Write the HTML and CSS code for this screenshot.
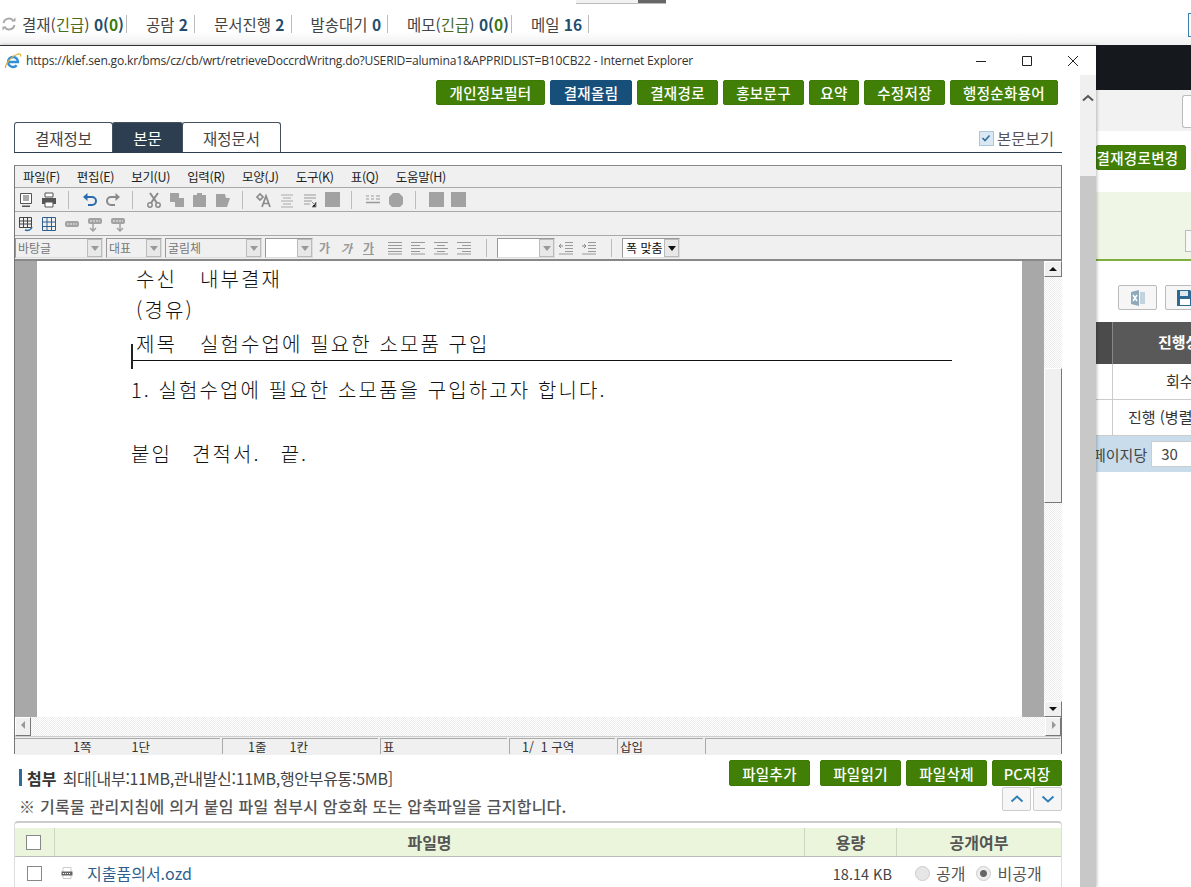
FILE: index.html
```html
<!DOCTYPE html>
<html lang="ko">
<head>
  <meta charset="UTF-8">
  <title>결재 문서 작성</title>
  <link rel="stylesheet" href="styles.css">
</head>
<body>
  <div class="searchbar"></div>
  <div class="status">
    <svg class="refresh" width="16" height="16" viewBox="0 0 16 16"><path d="M2.500 7A5.500 5.500 0 0 1 12.500 5M13.500 9A5.500 5.500 0 0 1 3.500 11" fill="none" stroke="#a8a8a8" stroke-width="1.800"/><path d="M10.500 5.500h4v-4zM5.500 10.500h-4v4z" fill="#a8a8a8"/></svg>
    <span class="stat">결재(<em>긴급</em>) <b>0(<i>0</i>)</b></span>
    <span class="stat stat-num">공람 <b>2</b></span>
    <span class="stat stat-num">문서진행 <b>2</b></span>
    <span class="stat stat-num">발송대기 <b>0</b></span>
    <span class="stat">메모(<em>긴급</em>) <b>0(<i>0</i>)</b></span>
    <span class="stat stat-num">메일 <b>16</b></span>
  </div>
  <div class="corner-box"></div>

  <!-- page behind the popup -->
  <div class="behind">
    <div class="dark-band"></div>
    <div class="grey-band"><span class="grey-chip"></span></div>
    <div class="route-row"><button class="btn route-btn">결재경로변경</button></div>
    <div class="green-panel"><span class="panel-chip"></span></div>
    <div class="tool-row">
      <span class="tool-btn"><svg width="18" height="18" viewBox="0 0 18 18"><path d="M2 3l8-2v16l-8-2z" fill="#8fa9bb"/><path d="M11 3h5v12h-5z" fill="#c3d3de"/><path d="M4 6l4 6M8 6l-4 6" stroke="#fff" stroke-width="1.500"/></svg></span>
      <span class="tool-btn"><svg width="18" height="18" viewBox="0 0 18 18"><path d="M1 1h13l3 3v13H1z" fill="#2c6a94"/><path d="M4 2h8v5H4z" fill="#dfe8ee"/><path d="M4 10h10v6H4z" fill="#fff"/></svg></span>
    </div>
    <div class="list-head"><span class="head-gap"></span><span class="head-cell">진행상태</span></div>
    <div class="list-row"><span class="row-gap"></span><span class="row-cell">회수</span></div>
    <div class="list-row"><span class="row-gap"></span><span class="row-cell row-long">진행 (병렬)</span></div>
    <div class="pager">페이지당 <span class="pager-select">30</span></div>
  </div>

  <!-- popup window -->
  <div class="popup">
    <div class="titlebar">
      <svg width="18" height="18" viewBox="0 0 18 18"><path d="M4.500 10h9.500a5 5 0 1 0-1.300 3.400" fill="none" stroke="#2f8fd6" stroke-width="2.400"/><path d="M1.500 16C1 13 7 4 14 2c2-.5 3 .5 2.500 2.500" fill="none" stroke="#e3b23c" stroke-width="1.300"/></svg>
      <span class="title-text">https://klef.sen.go.kr/bms/cz/cb/wrt/retrieveDoccrdWritng.do?USERID=alumina1&amp;APPRIDLIST=B10CB22 - Internet Explorer</span>
      <div class="win-controls">
        <svg width="12" height="12" viewBox="0 0 12 12"><path d="M1 6.500h10" stroke="#222"/></svg>
        <svg width="12" height="12" viewBox="0 0 12 12"><path d="M1.500 1.500h9v9h-9z" fill="none" stroke="#222"/></svg>
        <svg width="12" height="12" viewBox="0 0 12 12"><path d="M1 1l10 10M11 1L1 11" stroke="#222"/></svg>
      </div>
    </div>

    <div class="popup-body">
      <div class="popup-main">
        <div class="actions">
          <button class="btn">개인정보필터</button>
          <button class="btn btn-blue">결재올림</button>
          <button class="btn">결재경로</button>
          <button class="btn">홍보문구</button>
          <button class="btn">요약</button>
          <button class="btn">수정저장</button>
          <button class="btn">행정순화용어</button>
        </div>

        <div class="tabs">
          <span class="tab">결재정보</span>
          <span class="tab tab-on">본문</span>
          <span class="tab">재정문서</span>
          <label class="view-check"><span class="check"><svg width="10" height="10" viewBox="0 0 10 10"><path d="M1.500 5l2.500 2.500 4.500-5" fill="none" stroke="#2f6f9f" stroke-width="1.600"/></svg></span>본문보기</label>
        </div>

        <div class="editor">
          <div class="bar menu">
            <span>파일(F)</span><span>편집(E)</span><span>보기(U)</span><span>입력(R)</span><span>모양(J)</span><span>도구(K)</span><span>표(Q)</span><span>도움말(H)</span>
          </div>
          <div class="bar tools">
            <svg width="16" height="16" viewBox="0 0 16 16"><path d="M2.500 1.500h11v10h-11z" fill="#fff" stroke="#555"/><path d="M5 4h6M5 6h6M5 8h6" stroke="#555"/><path d="M4 13.500h8v1.500H4z" fill="#555"/></svg>
            <svg width="16" height="16" viewBox="0 0 16 16"><path d="M4 1h8v4H4z" fill="#fff" stroke="#555"/><path d="M1 6h14v6H1z" fill="#555"/><path d="M4 10h8v5H4z" fill="#fff" stroke="#555"/></svg>
            <i class="sep"></i>
            <svg width="16" height="16" viewBox="0 0 16 16"><path d="M4 5h6a3.500 3.500 0 0 1 0 8H6" fill="none" stroke="#2a6bb0" stroke-width="2"/><path d="M5.500 1v8L1 5z" fill="#2a6bb0"/></svg>
            <svg width="16" height="16" viewBox="0 0 16 16"><path d="M12 5H6a3.500 3.500 0 0 0 0 8h4" fill="none" stroke="#8a8a8a" stroke-width="2"/><path d="M10.500 1v8L15 5z" fill="#8a8a8a"/></svg>
            <i class="sep"></i>
            <svg width="16" height="16" viewBox="0 0 16 16"><path d="M4 1l7 10M12 1L5 11" stroke="#8a8a8a" stroke-width="2"/><circle cx="4" cy="13" r="2.200" fill="none" stroke="#8a8a8a" stroke-width="1.500"/><circle cx="12" cy="13" r="2.200" fill="none" stroke="#8a8a8a" stroke-width="1.500"/></svg>
            <svg width="16" height="16" viewBox="0 0 16 16"><path d="M1 1h9v5h5v9H6v-5H1z" fill="#a2a2a2"/></svg>
            <svg width="16" height="16" viewBox="0 0 16 16"><path d="M1 3h4V1h5v2h4v12H1z" fill="#a2a2a2"/></svg>
            <svg width="16" height="16" viewBox="0 0 16 16"><path d="M1 2h9l1 4h4l-3 9H1z" fill="#a2a2a2"/></svg>
            <i class="sep"></i>
            <svg width="16" height="16" viewBox="0 0 16 16"><path d="M1 5l3-3 3 3-3 3zM6 15l4-11 4 11M7.500 11.500h5" fill="none" stroke="#8a8a8a" stroke-width="1.700"/></svg>
            <svg width="16" height="16" viewBox="0 0 16 16"><path d="M2 3h12M4 6h8M2 9h12M4 12h8M2 15h12" stroke="#aaa"/></svg>
            <svg width="16" height="16" viewBox="0 0 16 16"><path d="M2 3h12M2 6h12M2 9h8M2 12h6" stroke="#999"/><path d="M10 10l4 4M14 10v5h-4" stroke="#8a8a8a"/></svg>
            <span class="blank"></span>
            <i class="sep"></i>
            <svg width="16" height="16" viewBox="0 0 16 16"><path d="M1 4h3M6 4h3M11 4h4M1 7h3M6 7h3M11 7h4" stroke="#999"/><path d="M1 10.500h14" stroke="#999" stroke-width="1.500"/></svg>
            <svg width="16" height="16" viewBox="0 0 16 16"><path d="M5 1h6l4 4v7l-3 3H4l-3-3V5z" fill="#a2a2a2"/></svg>
            <i class="sep"></i>
            <span class="blank"></span>
            <span class="blank"></span>
          </div>
          <div class="bar tools">
            <svg width="16" height="16" viewBox="0 0 16 16"><path d="M1.500 1.500h12v10h-12zM1.500 5h12M1.500 8h12M5.500 1.500v10M9.500 1.500v10" fill="none" stroke="#444"/><path d="M7 14c3 1 6 0 7-3" fill="none" stroke="#2a6bb0" stroke-width="1.500"/></svg>
            <svg width="16" height="16" viewBox="0 0 16 16"><path d="M1.500 1.500h13v13h-13zM1.500 6h13M1.500 10.500h13M6 1.500v13M10.500 1.500v13" fill="none" stroke="#2f5f8f"/></svg>
            <svg width="16" height="16" viewBox="0 0 16 16"><rect x="1" y="5" width="14" height="6" rx="2" fill="#a2a2a2"/><path d="M3 8h10" stroke="#eee" stroke-dasharray="2 1"/></svg>
            <svg width="16" height="16" viewBox="0 0 16 16"><rect x="1" y="2" width="14" height="6" rx="2" fill="#a2a2a2"/><path d="M3 5h10" stroke="#eee" stroke-dasharray="2 1"/><path d="M6 8v6M3 12l3 3 3-3" fill="none" stroke="#a2a2a2" stroke-width="1.500"/></svg>
            <svg width="16" height="16" viewBox="0 0 16 16"><rect x="1" y="2" width="14" height="6" rx="2" fill="#a2a2a2"/><path d="M3 5h10" stroke="#eee" stroke-dasharray="2 1"/><path d="M10 8v6M7 12l3 3 3-3" fill="none" stroke="#a2a2a2" stroke-width="1.500"/></svg>
          </div>
          <div class="bar format">
            <span class="combo w-face">바탕글<i class="drop"></i></span>
            <span class="combo w-rep">대표<i class="drop"></i></span>
            <span class="combo w-font">굴림체<i class="drop"></i></span>
            <span class="combo w-size white"><i class="drop"></i></span>
            <span class="fmt">가</span><span class="fmt it">가</span><span class="fmt un">가</span>
            <svg width="16" height="14" viewBox="0 0 16 14"><path d="M1 1.500h14M1 4.500h14M1 7.500h14M1 10.500h14M1 13h14" stroke="#999"/></svg>
            <svg width="16" height="14" viewBox="0 0 16 14"><path d="M1 1.500h14M1 4.500h9M1 7.500h14M1 10.500h9M1 13h14" stroke="#999"/></svg>
            <svg width="16" height="14" viewBox="0 0 16 14"><path d="M1 1.500h14M4 4.500h8M1 7.500h14M4 10.500h8M1 13h14" stroke="#999"/></svg>
            <svg width="16" height="14" viewBox="0 0 16 14"><path d="M1 1.500h14M6 4.500h9M1 7.500h14M6 10.500h9M1 13h14" stroke="#999"/></svg>
            <i class="sep"></i>
            <span class="combo w-spc white"><i class="drop"></i></span>
            <svg width="16" height="14" viewBox="0 0 16 14"><path d="M7 1.500h8M7 4.500h8M7 7.500h8M7 10.500h8M1 13h14" stroke="#999"/><path d="M5 5H1M3 3L1 5l2 2" fill="none" stroke="#888"/></svg>
            <svg width="16" height="14" viewBox="0 0 16 14"><path d="M7 1.500h8M7 4.500h8M7 7.500h8M7 10.500h8M1 13h14" stroke="#999"/><path d="M1 5h4M3 3l2 2-2 2" fill="none" stroke="#888"/></svg>
            <i class="sep"></i>
            <span class="combo w-zoom white">폭 맞춤<i class="drop dark"></i></span>
          </div>

          <div class="doc">
            <div class="doc-margin"></div>
            <div class="page">
              <p class="line l1"><span class="lbl">수신</span>내부결재</p>
              <p class="line l2">(경유)</p>
              <p class="line l3"><span class="lbl">제목</span>실험수업에 필요한 소모품 구입</p>
              <div class="doc-rule"></div>
              <i class="caret"></i>
              <p class="line l4">1. 실험수업에 필요한 소모품을 구입하고자 합니다.</p>
              <p class="line l5"><span class="lbl2">붙임</span><span class="lbl2">견적서.</span>끝.</p>
            </div>
            <div class="doc-margin"></div>
            <div class="vscroll">
              <span class="sbtn"><i class="up"></i></span>
              <span class="dither track-a"></span>
              <span class="sthumb"></span>
              <span class="dither track-b"></span>
              <span class="sbtn"><i class="down"></i></span>
            </div>
          </div>

          <div class="hscroll">
            <span class="sbtn"><i class="left"></i></span>
            <span class="dither hfill"></span>
            <span class="sbtn"><i class="right"></i></span>
          </div>
          <div class="statusline">
            <span class="c1"><b>1쪽</b><b>1단</b></span>
            <span class="c2"><b>1줄</b><b>1칸</b></span>
            <span class="c3">표</span>
            <span class="c4">1/ &nbsp;1 구역</span>
            <span class="c5">삽입</span>
            <span class="c6"></span>
          </div>
        </div>

        <div class="attach">
          <div class="attach-head">
            <div class="attach-text">
              <p class="limit"><strong>첨부</strong> 최대[내부:11MB,관내발신:11MB,행안부유통:5MB]</p>
              <p class="warn">※ 기록물 관리지침에 의거 붙임 파일 첨부시 암호화 또는 압축파일을 금지합니다.</p>
            </div>
            <div class="attach-side">
              <div class="file-btns">
                <button class="btn">파일추가</button>
                <button class="btn">파일읽기</button>
                <button class="btn">파일삭제</button>
                <button class="btn btn-pc">PC저장</button>
              </div>
              <div class="move-btns">
                <span class="move"><svg width="14" height="8" viewBox="0 0 14 8"><path d="M1.500 6.500L7 1.500l5.500 5" fill="none" stroke="#2f7fb8" stroke-width="2"/></svg></span>
                <span class="move"><svg width="14" height="8" viewBox="0 0 14 8"><path d="M1.500 1.500L7 6.500l5.500-5" fill="none" stroke="#2f7fb8" stroke-width="2"/></svg></span>
              </div>
            </div>
          </div>

          <div class="files">
            <div class="file-row file-top">
              <span class="fc-check"><i class="box"></i></span>
              <span class="fc-name">파일명</span>
              <span class="fc-size">용량</span>
              <span class="fc-open">공개여부</span>
            </div>
            <div class="file-row file-item">
              <span class="fc-check"><i class="box"></i></span>
              <span class="fc-name left">
                <svg width="14" height="14" viewBox="0 0 14 14"><path d="M3 1.500h8v11H3z" fill="#fff" stroke="#ccc"/><path d="M1.500 5.500h11v4h-11z" fill="#666"/><path d="M3 7.500h8" stroke="#fff" stroke-dasharray="1 1"/></svg>
                <a class="file-link">지출품의서.ozd</a>
              </span>
              <span class="fc-size val">18.14 KB</span>
              <span class="fc-open val"><i class="radio"></i>공개<i class="radio on"></i>비공개</span>
            </div>
          </div>
        </div>
      </div>

      <div class="page-scroll">
        <span class="page-up"><svg width="12" height="8" viewBox="0 0 12 8"><path d="M1 6.500L6 2l5 4.500" fill="none" stroke="#555" stroke-width="2"/></svg></span>
        <span class="page-thumb"></span>
      </div>
    </div>
  </div>
</body>
</html>
```

FILE: styles.css
```css
* {
  box-sizing: border-box;
}

html, body {
  margin: 0;
  height: 887px;
  overflow: hidden;
}

body {
  position: relative;
  width: 1191px;
  background: #fff;
  font-family: "Noto Sans CJK KR", "Noto Sans", sans-serif;
  color: #444;
}

p {
  margin: 0;
}

/* top strip */
.searchbar {
  position: absolute;
  left: 576px;
  top: 0;
  width: 90px;
  height: 4px;
  background: linear-gradient(to right, #f1f1f1 0, #f1f1f1 62px, #666 62px);
  border-bottom: 1px solid #bbb;
}

.status {
  display: flex;
  align-items: center;
  height: 45px;
  padding: 3px 0 0 1px;
  font-size: 15.500px;
  background: linear-gradient(to bottom, #fff 70%, #f0f0f0);
}

.refresh {
  flex: none;
  margin-right: 5px;
}

.stat {
  padding-right: 2px;
  margin-right: 19px;
  border-right: 1px solid #bbb;
  line-height: 18px;
  white-space: nowrap;
}

.stat-num {
  padding-right: 6px;
}

.stat em {
  font-style: normal;
  color: #4a6a1e;
}

.stat b {
  color: #1f4e6e;
}

.stat b i {
  font-style: normal;
  color: #3d7a0c;
}

.corner-box {
  position: absolute;
  right: 0;
  top: 13px;
  width: 3px;
  height: 24px;
  border: 1px solid #3a7fb0;
  border-right: 0;
}

/* page behind the popup */
.behind {
  margin-left: 1096px;
}

.dark-band {
  height: 45px;
  background: #15191d;
}

.grey-band {
  display: flex;
  justify-content: flex-end;
  height: 41px;
  padding-top: 5px;
  background: #f2f2f2;
}

.grey-chip {
  width: 9px;
  height: 33px;
  background: #fff;
  border: 1px solid #bbb;
  border-right: 0;
  border-radius: 3px 0 0 3px;
}

.route-row {
  height: 61px;
  padding-top: 14px;
}

.route-btn {
  display: block;
  width: 90px;
  height: 25px;
  border-radius: 0 3px 3px 0;
  white-space: nowrap;
  overflow: hidden;
  text-align: left;
  text-indent: -7px;
}

.green-panel {
  position: relative;
  height: 69px;
  background: #eff6e6;
  border-bottom: 2px solid #7fae3c;
}

.panel-chip {
  position: absolute;
  right: 0;
  bottom: 7px;
  width: 6px;
  height: 22px;
  border: 1px solid #bbb;
  border-right: 0;
  background: #f8f8f8;
}

.tool-row {
  display: flex;
  gap: 8px;
  height: 61px;
  padding: 24px 0 0 22px;
}

.tool-btn {
  display: flex;
  align-items: center;
  justify-content: center;
  flex: none;
  width: 39px;
  height: 25px;
  border: 1px solid #bbb;
  border-radius: 2px;
  background: #f6f6f6;
}

.list-head {
  display: flex;
  height: 42px;
  background: #595959;
  color: #fff;
  font-size: 15px;
  font-weight: 700;
}

.head-gap, .row-gap {
  flex: none;
  width: 17px;
  border-right: 1px solid #ccc;
}

.head-gap {
  background: #4b4b4b;
  border-right-color: #888;
}

.head-cell, .row-cell {
  flex: none;
  width: 100px;
  line-height: 40px;
  padding-left: 45px;
  white-space: nowrap;
}

.list-row {
  display: flex;
  height: 36px;
  font-size: 15px;
  color: #333;
  border-bottom: 1px solid #ccc;
}

.list-row .row-cell {
  padding-left: 53px;
  line-height: 34px;
}

.list-row .row-long {
  padding-left: 15px;
}

.pager {
  display: flex;
  align-items: center;
  gap: 4px;
  height: 36px;
  margin-left: -4px;
  font-size: 15px;
  color: #444;
  background: #c8dceb;
  overflow: hidden;
  white-space: nowrap;
}

.pager-select {
  flex: none;
  width: 60px;
  height: 26px;
  padding-left: 9px;
  line-height: 24px;
  font-size: 15px;
  background: #fff;
  border: 1px solid #ccc;
}

/* popup */
.popup {
  position: absolute;
  left: 0;
  top: 45px;
  width: 1096px;
  height: 842px;
  background: #fff;
  border-top: 1px solid #333;
  box-shadow: 1px 0 3px rgba(0, 0, 0, 0.25);
  display: flex;
  flex-direction: column;
}

.titlebar {
  display: flex;
  align-items: center;
  flex: none;
  height: 29px;
  padding-left: 4px;
  font-family: "Open Sans", sans-serif;
  font-size: 12px;
  color: #333;
}

.titlebar > svg {
  flex: none;
}

.title-text {
  margin-left: 4px;
  font-size: 12.100px;
  letter-spacing: -0.190px;
  white-space: nowrap;
}

.win-controls {
  display: flex;
  gap: 34px;
  margin-left: auto;
  padding-right: 17px;
}

.popup-body {
  display: flex;
  flex: 1;
  min-height: 0;
}

.popup-main {
  flex: none;
  width: 1080px;
  padding: 5px 18px 0 14px;
}

.btn {
  display: inline-flex;
  align-items: center;
  justify-content: center;
  height: 25px;
  padding: 0;
  border: 1px solid #3d7a06;
  border-radius: 2px;
  background: #417f07;
  color: #fff;
  font-family: "Noto Sans CJK KR", sans-serif;
  font-size: 14.500px;
  font-weight: 500;
  letter-spacing: 0.300px;
}

.btn-blue {
  background: #174f7b;
  border-color: #174f7b;
}

.actions {
  display: flex;
  justify-content: flex-end;
  gap: 5px;
  height: 25px;
  padding-right: 4px;
}

.actions .btn:nth-child(1) { width: 109px; }
.actions .btn:nth-child(2) { width: 82px; }
.actions .btn:nth-child(3) { width: 81px; }
.actions .btn:nth-child(4) { width: 81px; }
.actions .btn:nth-child(5) { width: 50px; }
.actions .btn:nth-child(6) { width: 81px; }
.actions .btn:nth-child(7) { width: 108px; }

.tabs {
  display: flex;
  align-items: flex-end;
  height: 31px;
  margin-top: 17px;
  border-bottom: 1px solid #2d3f50;
}

.tab {
  display: flex;
  align-items: center;
  justify-content: center;
  width: 99px;
  height: 30px;
  font-size: 15.500px;
  border: 1px solid #44525f;
  border-bottom: 0;
  border-radius: 3px 3px 0 0;
  color: #444;
}

.tab:nth-child(2) {
  width: 71px;
  margin-left: -1px;
}

.tab:nth-child(3) {
  margin-left: -1px;
}

.tab-on {
  background: #2c3e50;
  color: #fff;
}

.view-check {
  display: flex;
  align-items: center;
  gap: 3px;
  margin-left: auto;
  margin-right: 8px;
  height: 28px;
  font-size: 15.500px;
  color: #555;
}

.check {
  display: flex;
  align-items: center;
  justify-content: center;
  width: 15px;
  height: 15px;
  border: 1px solid #a9c6dc;
  background: #d9e8f3;
}

/* editor */
.editor {
  height: 589px;
  margin-top: 12px;
  border: 1px solid #777;
  border-top-color: #888;
  background: #eee;
  display: flex;
  flex-direction: column;
}

.bar {
  display: flex;
  align-items: center;
  flex: none;
  background: #f0f0f0;
  border-bottom: 1px solid #a8a8a8;
}

.menu {
  height: 22px;
  gap: 17px;
  padding-left: 8px;
  font-size: 12.500px;
  color: #222;
  letter-spacing: -0.300px;
}

.tools {
  height: 24px;
  gap: 7px;
  padding-left: 3px;
}

.tools svg {
  flex: none;
}

.sep {
  flex: none;
  width: 1px;
  height: 18px;
  margin: 0 6px 0 4px;
  background: #bbb;
}

.blank {
  flex: none;
  width: 15px;
  height: 15px;
  background: #a2a2a2;
}

.format {
  height: 25px;
  gap: 3px;
  padding-left: 0;
  border-bottom: 2px solid #888;
}

.format svg {
  flex: none;
  margin-left: 4px;
}

.format .combo + svg {
  margin-left: 0;
}

.format .sep {
  margin: 0 7px 0 9px;
}

.format svg + svg + .sep {
  margin-left: 11px;
}

.combo {
  position: relative;
  flex: none;
  height: 20px;
  padding-left: 2px;
  font-size: 12px;
  line-height: 17px;
  color: #777;
  background: #f0f0f0;
  border: 1px solid #999;
  border-right-color: #ddd;
  border-bottom-color: #ddd;
  white-space: nowrap;
}

.white {
  background: #fff;
}

.drop {
  position: absolute;
  right: 0;
  top: 0;
  width: 15px;
  height: 18px;
  background: #e8e8e8;
  border: 1px solid #bbb;
}

.drop::after {
  content: "";
  position: absolute;
  left: 3px;
  top: 6px;
  border: 4px solid transparent;
  border-top: 5px solid #999;
  border-bottom: 0;
}

.drop.dark::after {
  border-top-color: #111;
}

.w-face { width: 88px; }
.w-rep { width: 56px; }
.w-font { width: 97px; }
.w-size { width: 48px; }
.w-spc { width: 58px; }
.w-zoom {
  width: 58px;
  color: #111;
  padding-left: 3px;
}

.fmt {
  width: 17px;
  margin-left: 2px;
  text-align: center;
  font-size: 12px;
  font-weight: 700;
  color: #999;
}

.w-size + .fmt {
  margin-left: 0;
}

.fmt.it {
  font-style: italic;
}

.fmt.un {
  margin-right: 3px;
  text-decoration: underline;
}

.doc {
  display: flex;
  flex: none;
  height: 456px;
  background: #fff;
}

.doc-margin {
  flex: none;
  width: 22px;
  background: #a8a8a8;
}

.page {
  position: relative;
  flex: none;
  width: 985px;
  overflow: hidden;
  font-size: 20px;
  font-weight: 300;
  color: #111;
}

.line {
  position: absolute;
  line-height: 30px;
  white-space: nowrap;
  letter-spacing: 2.100px;
}

.l1 { left: 99px; top: 3px; }
.l2 { left: 99px; top: 34px; }
.l3 { left: 99px; top: 68px; }
.l4 { left: 94px; top: 114px; }
.l5 { left: 94px; top: 178px; }

.lbl {
  display: inline-block;
  width: 64px;
}

.lbl2 {
  display: inline-block;
  margin-right: 20px;
}

.doc-rule {
  position: absolute;
  left: 95px;
  top: 99px;
  width: 820px;
  height: 1px;
  background: #111;
}

.caret {
  position: absolute;
  left: 94px;
  top: 83px;
  width: 2px;
  height: 25px;
  background: #222;
}

.vscroll {
  display: flex;
  flex-direction: column;
  flex: none;
  width: 18px;
  background: #eee;
}

.sbtn {
  position: relative;
  display: block;
  flex: none;
  width: 18px;
  height: 16px;
  background: #f0f0f0;
  border: 1px solid #fff;
  border-right-color: #777;
  border-bottom-color: #777;
}

.sbtn i {
  position: absolute;
  width: 0;
  height: 0;
  border: 4px solid transparent;
}

.sbtn .up {
  left: 4px;
  top: 1px;
  border-bottom-color: #111;
}

.sbtn .down {
  left: 4px;
  top: 5px;
  border-top-color: #111;
}

.sbtn .left {
  left: 1px;
  top: 3px;
  border-right-color: #999;
}

.sbtn .right {
  left: 6px;
  top: 3px;
  border-left-color: #999;
}

.dither {
  display: block;
  background: repeating-conic-gradient(#ececec 0 25%, #fff 0 50%) 0 0 / 2px 2px;
}

.track-a {
  flex: none;
  height: 91px;
}

.track-b {
  flex: 1;
}

.sthumb {
  display: block;
  flex: none;
  height: 135px;
  background: #f0f0f0;
  border: 1px solid #fff;
  border-right-color: #777;
  border-bottom-color: #777;
}

.hscroll {
  display: flex;
  flex: none;
  height: 19px;
}

.hscroll .sbtn {
  height: 19px;
  width: 16px;
}

.hfill {
  flex: 1;
}

.statusline {
  display: flex;
  flex: 1;
  gap: 2px;
  padding: 1px 1px 1px 0;
  font-size: 12.500px;
  line-height: 15px;
  color: #333;
  background: #f0f0f0;
  border-top: 1px solid #ccc;
}

.statusline span {
  flex: none;
  display: block;
  background: #f0f0f0;
  border-left: 1px solid #aaa;
  border-top: 1px solid #aaa;
  white-space: nowrap;
}

.statusline b {
  font-weight: 400;
}

.statusline .c1 {
  width: 205px;
  padding-left: 58px;
  border-left: 0;
}

.c1 b:first-child { margin-right: 40px; }
.c2 { width: 156px; padding-left: 25px; }
.c2 b:first-child { margin-right: 23px; }
.c3 { width: 127px; padding-left: 2px; }
.c4 { width: 106px; padding-left: 12px; }
.c5 { width: 86px; padding-left: 2px; }
.statusline .c6 { flex: 1; }

/* attachments */
.attach-head {
  display: flex;
  justify-content: space-between;
  height: 61px;
  margin-top: 6px;
}

.attach-text {
  padding: 9px 0 0 5px;
}

.limit {
  height: 17px;
  padding-left: 5px;
  font-size: 16px;
  line-height: 19px;
  letter-spacing: -0.300px;
  color: #444;
  border-left: 3px solid #2a6d9e;
  white-space: nowrap;
}

.limit strong {
  margin-right: 2px;
  letter-spacing: 0;
  color: #333;
}

.warn {
  margin-top: 11px;
  font-size: 16px;
  font-weight: 500;
  line-height: 18px;
  color: #555;
  letter-spacing: 0.250px;
  white-space: nowrap;
}

.file-btns {
  display: flex;
  gap: 5px;
}

.file-btns .btn {
  width: 81px;
  height: 26px;
}

.file-btns .btn:first-child {
  margin-right: 5px;
}

.file-btns .btn-pc {
  width: 70px;
}

.move-btns {
  display: flex;
  justify-content: flex-end;
  gap: 2px;
  margin-top: 1px;
}

.move {
  display: flex;
  align-items: center;
  justify-content: center;
  width: 29px;
  height: 24px;
  border: 1px solid #ccc;
  border-radius: 2px;
  background: #f6f6f6;
}

.files {
  height: 70px;
  border: 1px solid #ddd;
  border-top: 2px solid #ccc;
  border-radius: 4px 4px 0 0;
  padding-top: 5px;
}

.file-row {
  display: flex;
  align-items: center;
  height: 29px;
  font-size: 16px;
  color: #444;
}

.file-item {
  height: 31px;
  padding-top: 1px;
}

.file-top {
  background: #eaf5dc;
  border-bottom: 1px solid #bbb;
  font-weight: 700;
  color: #555;
}

.file-top > span {
  height: 100%;
  line-height: 28px;
  border-right: 1px solid #cdd6c0;
}

.file-top > span:last-child {
  border-right: 0;
}

.file-top .box {
  margin-left: -2px;
}

.fc-check {
  display: flex;
  align-items: center;
  justify-content: center;
  flex: none;
  width: 40px;
}

.file-item .box {
  margin-left: -1px;
}

.fc-name {
  flex: none;
  width: 750px;
  text-align: center;
}

.fc-name.left {
  display: flex;
  align-items: center;
  gap: 13px;
  padding-left: 5px;
  text-align: left;
}

.fc-size {
  flex: none;
  width: 92px;
  text-align: center;
}

.fc-size.val {
  padding-right: 5px;
  font-size: 14.500px;
  text-align: right;
}

.fc-open {
  flex: 1;
  text-align: center;
}

.val {
  font-weight: 400;
  white-space: nowrap;
}

.fc-open.val {
  display: flex;
  align-items: center;
  padding-left: 18px;
  color: #555;
}

.box {
  display: block;
  width: 15px;
  height: 15px;
  background: #fff;
  border: 1px solid #888;
}

.file-link {
  color: #2e5f8f;
  font-size: 16px;
}

.radio {
  display: block;
  flex: none;
  width: 15px;
  height: 15px;
  margin-right: 6px;
  border: 1px solid #ccc;
  border-radius: 50%;
  background: #e6e6e6;
}

.radio.on {
  margin-left: 11px;
  background: radial-gradient(circle, #666 0 3px, #eee 4px);
}

/* popup's own scrollbar */
.page-scroll {
  display: flex;
  flex-direction: column;
  flex: none;
  width: 16px;
  background: #f0f0f0;
}

.page-up {
  display: flex;
  align-items: center;
  justify-content: center;
  height: 42px;
  padding-top: 3px;
}

.page-thumb {
  display: block;
  flex: 1;
  margin-top: 59px;
  background: #c8c8c8;
}
```
